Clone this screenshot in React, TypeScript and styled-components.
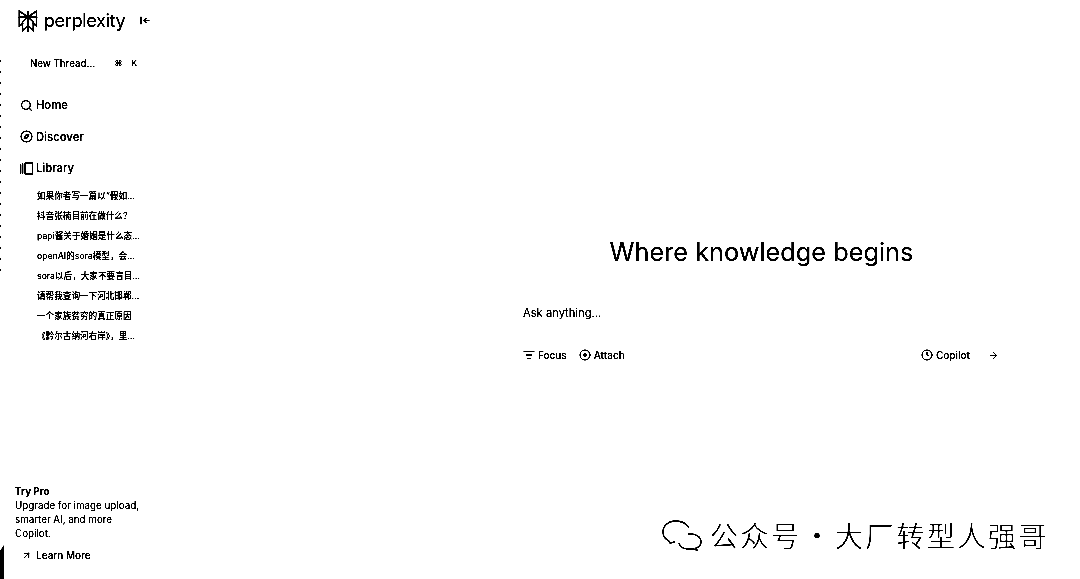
import styled, { createGlobalStyle } from "styled-components";
import {
  ArrowRight,
  ArrowUpRight,
  CirclePlus,
  Clock,
  Compass,
  ListFilter,
  Search,
} from "lucide-react";

const threads = [
  "如果你者写一篇以“假如…",
  "抖音张楠目前在做什么?",
  "papi酱关于婚姻是什么态…",
  "openAI的sora模型，会…",
  "sora以后，大家不要盲目…",
  "请帮我查询一下河北邯郸…",
  "一个家族贫穷的真正原因",
  "《黔尔古纳河右岸》，里…",
];

const Logo = () => (
  <svg width="20" height="23" viewBox="0 0 22 25" fill="none" stroke="#000" strokeWidth="1.7">
    <path d="M1.5 1v6.500h19V1L11 7.500 1.500 1ZM11 1v23" />
    <path d="M1.500 7.500v10l4-3.500M20.500 7.500v10l-4-3.500" />
    <path d="M11 7.500 5 13v10l6-6M11 7.500l6 5.500V23l-6-6" />
  </svg>
);

const Collapse = () => (
  <svg width="10" height="9" viewBox="0 0 10 9" fill="none" stroke="#000" strokeWidth="1.2">
    <path d="M1 0.500v8M9.500 4.500H4M6.500 2 4 4.500 6.500 7" />
  </svg>
);

const LibraryIcon = () => (
  <svg width="13" height="13" viewBox="0 0 13 13" fill="none" stroke="#000" strokeWidth="1.300">
    <path d="M0.700 2.500v9M2.700 1.500v10" />
    <rect x="5" y="1" width="7.500" height="11" rx="0.500" />
  </svg>
);

const WeChatMark = () => (
  <svg width="40" height="31" viewBox="0 0 40 31" fill="none" stroke="#000" strokeWidth="1.300">
    <path d="M27 8C24 3 19 1 14 1 6 1 1 6 1 12c0 4 2 7 6 9l1 2 5-1" />
    <path d="M26 14c8-1 13 3 13 8 0 3-2 5-5 6l1 2-4-1c-7 1-13-1-14-6" />
  </svg>
);

const App = () => {
  return (
    <Page>
      <GlobalStyle />
      <DottedEdge />
      <EdgeBar />
      <Sidebar>
        <Brand>
          <Logo />
          <BrandName>perplexity</BrandName>
          <Collapse />
        </Brand>
        <NewThread>
          <span>New Thread…</span>
          <Shortcut>
            <span>⌘</span>
            <span>K</span>
          </Shortcut>
        </NewThread>
        <Nav>
          <NavItem>
            <Search size={13} strokeWidth={2.2} />
            Home
          </NavItem>
          <NavItem>
            <Compass size={13} strokeWidth={2.2} />
            Discover
          </NavItem>
          <NavItem>
            <LibraryIcon />
            Library
          </NavItem>
        </Nav>
        <ThreadList>
          {threads.map((title) => (
            <ThreadItem key={title}>{title}</ThreadItem>
          ))}
        </ThreadList>
        <Promo>
          <PromoTitle>Try Pro</PromoTitle>
          <PromoText>
            Upgrade for image upload,
            <br />
            smarter AI, and more
            <br />
            Copilot.
          </PromoText>
          <LearnMore>
            <ArrowUpRight size={11} strokeWidth={2.2} />
            Learn More
          </LearnMore>
        </Promo>
      </Sidebar>
      <Main>
        <Heading>Where knowledge begins</Heading>
        <Prompt>Ask anything...</Prompt>
        <Toolbar>
          <ToolGroup>
            <Tool>
              <ListFilter size={12} strokeWidth={2} />
              Focus
            </Tool>
            <Tool>
              <CirclePlus size={12} strokeWidth={2} />
              Attach
            </Tool>
          </ToolGroup>
          <ToolGroup>
            <Tool>
              <Clock size={12} strokeWidth={2} />
              Copilot
            </Tool>
            <SendButton>
              <ArrowRight size={11} strokeWidth={2} />
            </SendButton>
          </ToolGroup>
        </Toolbar>
      </Main>
      <Watermark>
        <WeChatMark />
        <span>公众号 · 大厂转型人强哥</span>
      </Watermark>
    </Page>
  );
};

export default App;

const GlobalStyle = createGlobalStyle`
  html, body {
    margin: 0;
    padding: 0;
    background: #fff;
    overflow: hidden;
  }
  body {
    font-family: Inter, "Noto Sans CJK SC", sans-serif;
    color: #000;
  }
`;

/* the source is a 1-bit scan of a screenshot, the filter gives the same hard edges */
const Page = styled.div`
  position: relative;
  display: flex;
  width: 1080px;
  height: 579px;
  overflow: hidden;
  background: #fff;
  filter: grayscale(1) brightness(0.8) contrast(6);
`;

const DottedEdge = styled.div`
  position: absolute;
  left: 0;
  top: 60px;
  width: 1px;
  height: 220px;
  background: repeating-linear-gradient(to bottom, #000 0 2px, transparent 2px 11px);
`;

const EdgeBar = styled.div`
  position: absolute;
  left: 0;
  bottom: 0;
  width: 4px;
  height: 34px;
  background: #000;
  clip-path: polygon(0 6px, 100% 0, 100% 100%, 0 100%);
`;

const Sidebar = styled.aside`
  display: flex;
  flex-direction: column;
  flex: 0 0 150px;
  width: 150px;
  height: 579px;
`;

const Brand = styled.div`
  display: flex;
  align-items: center;
  gap: 6px;
  height: 25px;
  margin: 9px 0 0 18px;

  & > svg:last-child {
    margin-left: -2px;
    margin-bottom: 2px;
  }
`;

const BrandName = styled.span`
  width: 93px;
  padding-bottom: 2px;
  font-size: 18.200px;
  line-height: 23px;
  letter-spacing: -0.4px;
`;

const NewThread = styled.div`
  display: flex;
  align-items: center;
  justify-content: space-between;
  width: 107px;
  height: 16px;
  margin: 21px 0 0 30px;
  font-size: 9.700px;
  font-weight: 500;
`;

const Shortcut = styled.span`
  display: flex;
  gap: 9px;
  font-size: 8px;
`;

const Nav = styled.nav`
  display: flex;
  flex-direction: column;
  gap: 15.500px;
  margin: 26px 0 0 20px;
`;

const NavItem = styled.div`
  display: flex;
  align-items: center;
  gap: 3px;
  height: 16px;
  font-size: 11.200px;
  font-weight: 600;
`;

const ThreadList = styled.ul`
  display: flex;
  flex-direction: column;
  gap: 6px;
  margin: 13px 0 0 37px;
  padding: 0;
  list-style: none;
`;

const ThreadItem = styled.li`
  height: 14px;
  font-size: 8.600px;
  line-height: 14px;
  font-weight: 500;
  white-space: nowrap;
`;

const Promo = styled.div`
  display: flex;
  flex-direction: column;
  margin: auto 0 17px 15px;
  font-size: 9.800px;
  line-height: 14px;
`;

const PromoTitle = styled.div`
  font-weight: 700;
`;

const PromoText = styled.div`
  white-space: nowrap;
`;

const LearnMore = styled.div`
  display: flex;
  align-items: center;
  gap: 4px;
  margin: 7px 0 0 6px;
  font-size: 10px;
  font-weight: 500;
`;

const Main = styled.main`
  display: flex;
  flex-direction: column;
  flex: 0 0 477px;
  margin-left: 373px;
  padding-top: 234px;
`;

const Heading = styled.h1`
  margin: 0;
  font-size: 25.300px;
  line-height: 36px;
  font-weight: 400;
  text-align: center;
  white-space: nowrap;
`;

const Prompt = styled.div`
  margin-top: 34px;
  font-size: 11.200px;
  line-height: 18px;
`;

const Toolbar = styled.div`
  display: flex;
  align-items: center;
  justify-content: space-between;
  margin-top: 25px;
`;

const ToolGroup = styled.div`
  display: flex;
  align-items: center;
  gap: 12px;
`;

const Tool = styled.div`
  display: flex;
  align-items: center;
  gap: 3px;
  font-size: 10px;
  font-weight: 500;
  line-height: 16px;
`;

const SendButton = styled.div`
  display: flex;
  margin: 0 1px 0 6px;
`;

const Watermark = styled.div`
  position: absolute;
  left: 662px;
  top: 516px;
  display: flex;
  align-items: center;
  gap: 8px;
  height: 38px;
  font-family: "Noto Sans CJK SC", sans-serif;
  font-size: 28px;
  font-weight: 300;
  letter-spacing: 2.600px;
  word-spacing: -7.500px;
  white-space: nowrap;
`;
